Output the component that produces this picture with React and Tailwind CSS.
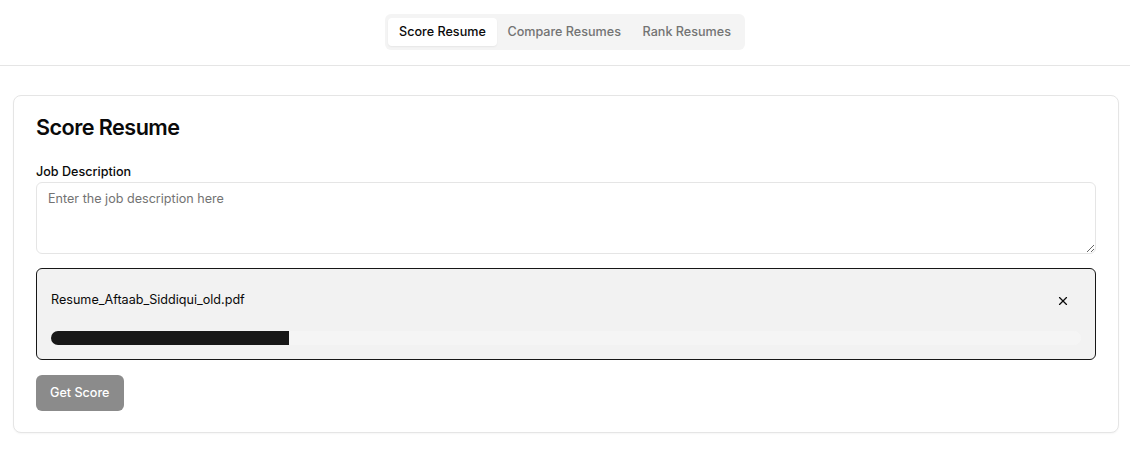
import React from "react";
import { X } from "lucide-react";

export default function App() {
  return (
    <div className="min-h-[476px] bg-white text-[#0a0a0a]" style={{ fontFamily: "Inter, 'Noto Sans', sans-serif" }}>
      <header className="h-[66px] border-b border-[#e5e5e5] flex justify-center pt-[14px]">
        <div className="h-9 flex items-center rounded-md bg-[#f4f4f4] p-[3.6px]">
          <button className="h-7 px-[10.8px] rounded-[4px] bg-white text-[12.6px] font-medium text-[#0a0a0a] shadow-[0_1px_2px_rgba(0,0,0,0.06)]">Score Resume</button>
          <button className="h-7 px-[10.8px] text-[12.6px] font-medium text-[#737373]">Compare Resumes</button>
          <button className="h-7 px-[10.8px] text-[12.6px] font-medium text-[#737373]">Rank Resumes</button>
        </div>
      </header>
      <main className="pl-[13px] pr-[11px] pt-[29px]">
        <div className="rounded-lg border border-[#e5e5e5] bg-white px-[22px] pt-[15px] pb-[21px] shadow-[0_1px_2px_rgba(0,0,0,0.04)]">
          <h1 className="text-[21.6px] leading-8 font-semibold tracking-tight">Score Resume</h1>
          <label className="block mt-[19px] text-[12.6px] leading-5 font-medium">Job Description</label>
          <textarea
            className="block w-full h-[72px] rounded-md border border-[#e5e5e5] px-[11px] py-[7px] text-[12.6px] leading-[18px] placeholder:text-[#737373] outline-none"
            placeholder="Enter the job description here"
          />
          <div className="mt-[14px] h-[92px] rounded-md border border-[#171717] bg-[#f2f2f2] px-[14px] flex flex-col">
            <div className="flex items-center justify-between h-[62px] pt-[1px]">
              <span className="text-[12.6px] text-[#0a0a0a]">Resume_Aftaab_Siddiqui_old.pdf</span>
              <X className="w-[14px] h-[14px] mr-[11px] text-[#0a0a0a]" strokeWidth={2} />
            </div>
            <div className="h-3.5 w-full rounded-full bg-[#f5f5f5] overflow-hidden">
              <div className="h-full bg-[#171717]" style={{ width: "23.1%" }} />
            </div>
          </div>
          <button className="mt-[15px] h-9 px-[14px] rounded-md bg-[#8b8b8b] text-white text-[12.6px] font-medium">Get Score</button>
        </div>
      </main>
    </div>
  );
}
